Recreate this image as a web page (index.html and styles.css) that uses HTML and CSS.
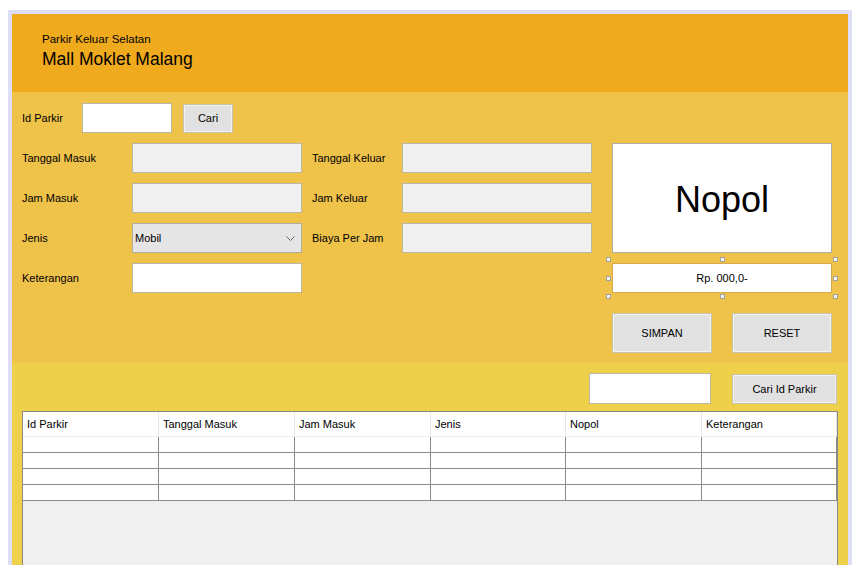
FILE: index.html
```html
<!DOCTYPE html>
<html>
<head>
<meta charset="utf-8">
<link rel="stylesheet" href="styles.css">
</head>
<body>
<div class="frame">
  <div class="panel">
    <header class="head">
      <div class="sub">Parkir Keluar Selatan</div>
      <div class="title">Mall Moklet Malang</div>
    </header>

    <section class="main">
      <div class="idrow">
        <span class="lbl idlbl">Id Parkir</span>
        <div class="field white idfield"></div>
        <div class="btn cari">Cari</div>
      </div>

      <div class="grid">
        <span class="lbl">Tanggal Masuk</span>
        <div class="field grey"></div>
        <span class="lbl mid">Tanggal Keluar</span>
        <div class="field grey"></div>
        <div class="nopol">Nopol</div>

        <span class="lbl">Jam Masuk</span>
        <div class="field grey"></div>
        <span class="lbl mid">Jam Keluar</span>
        <div class="field grey"></div>

        <span class="lbl">Jenis</span>
        <div class="combo">
          <span>Mobil</span>
          <svg class="chev" width="9" height="6" viewBox="0 0 9 6"><polyline points="0.5,0.5 4.5,4.5 8.5,0.5" fill="none" stroke="#606060" stroke-width="1"/></svg>
        </div>
        <span class="lbl mid">Biaya Per Jam</span>
        <div class="field grey"></div>

        <span class="lbl">Keterangan</span>
        <div class="field white"></div>
        <div class="rpwrap">
          <div class="rp">Rp. 000,0-</div>
          <i class="h h-tl"></i><i class="h h-tc"></i><i class="h h-tr"></i>
          <i class="h h-ml"></i><i class="h h-mr"></i>
          <i class="h h-bl"></i><i class="h h-bc"></i><i class="h h-br"></i>
        </div>

        <div class="actions">
          <div class="btn big">SIMPAN</div>
          <div class="btn big">RESET</div>
        </div>
      </div>
    </section>

    <section class="lower">
      <div class="searchrow">
        <div class="field white search"></div>
        <div class="btn caribtn">Cari Id Parkir</div>
      </div>
      <div class="table">
        <div class="thead">
          <div class="th c1">Id Parkir</div>
          <div class="th c2">Tanggal Masuk</div>
          <div class="th c3">Jam Masuk</div>
          <div class="th c4">Jenis</div>
          <div class="th c5">Nopol</div>
          <div class="th c6">Keterangan</div>
        </div>
        <div class="tr"><div class="td c1"></div><div class="td c2"></div><div class="td c3"></div><div class="td c4"></div><div class="td c5"></div><div class="td c6"></div></div>
        <div class="tr"><div class="td c1"></div><div class="td c2"></div><div class="td c3"></div><div class="td c4"></div><div class="td c5"></div><div class="td c6"></div></div>
        <div class="tr"><div class="td c1"></div><div class="td c2"></div><div class="td c3"></div><div class="td c4"></div><div class="td c5"></div><div class="td c6"></div></div>
        <div class="tr"><div class="td c1"></div><div class="td c2"></div><div class="td c3"></div><div class="td c4"></div><div class="td c5"></div><div class="td c6"></div></div>
      </div>
    </section>
  </div>
</div>
</body>
</html>
```

FILE: styles.css
```css
* { box-sizing: border-box; }
html, body { margin: 0; padding: 0; background: #ffffff; overflow: hidden; height: 565px; }
body { font-family: "Liberation Sans", Arial, sans-serif; font-size: 11px; color: #000; }

.frame {
  margin: 10px 0 0 8px;
  width: 844px;
  height: 555px;
  border: 4px solid #dedef6;
  border-bottom: none;
  overflow: hidden;
}
.panel { width: 836px; }

.head {
  background: #f0aa1e;
  height: 78px;
  padding: 18px 0 0 30px;
}
.sub { font-size: 11.5px; line-height: 14px; }
.title { font-size: 17.5px; line-height: 20px; margin-top: 3px; }

.main {
  background: #efc24a;
  padding: 11px 0 10px 10px;
}
.idrow { display: flex; align-items: center; height: 30px; margin-bottom: 10px; }
.idlbl { width: 60px; }
.idfield { width: 90px; height: 29px; }
.cari { width: 50px; height: 29px; margin-left: 11px; }

.lbl { align-self: center; white-space: nowrap; }
.lbl.mid { padding-left: 10px; }

.field { border: 1px solid #bdb6a6; height: 30px; }
.field.white { background: #ffffff; }
.field.grey { background: #f0f0f0; }

.grid {
  display: grid;
  grid-template-columns: 110px 170px 100px 190px 240px;
  grid-template-rows: 30px 30px 30px 30px 50px;
  row-gap: 10px;
}

.combo {
  background: #e5e5e5;
  border: 1px solid #b5ae9f;
  display: flex;
  align-items: center;
  justify-content: space-between;
  padding: 0 6px 0 2px;
}
.chev { margin-top: 1px; }

.nopol {
  grid-column: 5;
  grid-row: 1 / span 3;
  margin-left: 20px;
  width: 220px;
  background: #ffffff;
  border: 1px solid #b0ada6;
  display: flex;
  align-items: center;
  justify-content: center;
  font-size: 36px;
  padding-top: 4px;
}

.rpwrap {
  grid-column: 5;
  grid-row: 4;
  margin-left: 20px;
  width: 220px;
  position: relative;
}
.rp {
  height: 30px;
  background: #ffffff;
  border: 1px solid #d6a850;
  display: flex;
  align-items: center;
  justify-content: center;
  font-size: 11px;
}
.h {
  position: absolute;
  width: 5px;
  height: 5px;
  background: #f4f4f4;
  border: 1px solid #a2a2a2;
}
.h-tl { left: -6px; top: -6px; }
.h-tc { left: calc(50% - 2px); top: -6px; }
.h-tr { right: -6px; top: -6px; }
.h-ml { left: -6px; top: calc(50% - 2px); }
.h-mr { right: -6px; top: calc(50% - 2px); }
.h-bl { left: -6px; bottom: -6px; }
.h-bc { left: calc(50% - 2px); bottom: -6px; }
.h-br { right: -6px; bottom: -6px; }

.actions {
  grid-column: 5;
  grid-row: 5;
  align-self: end;
  margin-left: 20px;
  width: 220px;
  display: flex;
  gap: 20px;
}

.btn {
  background: #e1e1e1;
  border: 1px solid #c9c1ae;
  box-shadow: inset 0 0 0 1px #f2f2f2;
  display: flex;
  align-items: center;
  justify-content: center;
  white-space: nowrap;
}
.btn.big { width: 100px; height: 40px; }

.lower {
  background: #efd04a;
  padding: 10px 10px 0 10px;
  height: 202px;
  overflow: hidden;
}
.searchrow { display: flex; justify-content: flex-end; align-items: flex-start; height: 31px; }
.search { width: 122px; height: 31px; }
.caribtn { width: 105px; height: 30px; margin-left: 21px; margin-right: 1px; margin-top: 1px; }

.table {
  margin-top: 7px;
  width: 816px;
  height: 170px;
  border: 1px solid #888888;
  background: #f0f0f0;
}
.thead { display: flex; height: 25px; border-bottom: 1px solid #ececec; background: #fff; }
.th {
  background: #ffffff;
  border-right: 1px solid #e6e6e6;
  padding-left: 4px;
  line-height: 24px;
  white-space: nowrap;
}
.tr { display: flex; height: 16px; border-bottom: 1px solid #8a8a8a; }
.td { background: #ffffff; border-right: 1px solid #8a8a8a; }
.c1, .c2, .c3, .c5 { width: 136px; }
.c4, .c6 { width: 135px; }
```
